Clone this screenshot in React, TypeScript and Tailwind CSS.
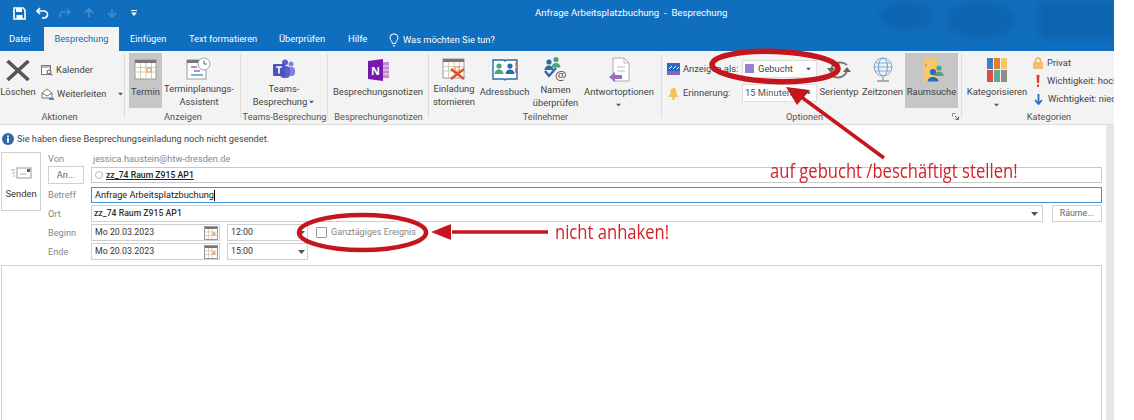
import React from "react";

const Caret = ({ className = "" }: { className?: string }) => (
  <svg width="7" height="4" viewBox="0 0 7 4" className={className}><path d="M0 0h7L3.500 4z" fill="#555" /></svg>
);

const Group = ({ w, label, labelCls = "", sep = true, children }: { w: string; label: string; labelCls?: string; sep?: boolean; children: React.ReactNode }) => (
  <div className={`${w} h-full flex flex-col shrink-0 relative`}>
    <div className="flex-1 flex min-h-0 pt-[2px]">{children}</div>
    <div className={`h-[17px] pt-[3px] text-center text-[9.2px] leading-[14px] text-[#555] whitespace-nowrap ${labelCls}`}>{label}</div>
    {sep && <div className="absolute right-0 top-[3px] bottom-[6px] w-px bg-[#dcdcdc]" />}
  </div>
);

const Big = ({ w, icon, lines, active, caret, inlineCaret }: { w: string; icon: React.ReactNode; lines: string[]; active?: boolean; caret?: boolean; inlineCaret?: boolean }) => (
  <div className={`${w} h-[55px] flex flex-col items-center shrink-0 ${active ? "bg-[#c6c6c6]" : ""}`}>
    <div className="h-[31px] flex items-center justify-center pt-[3px]">{icon}</div>
    <div className="text-[9.4px] leading-[13px] text-[#444] text-center whitespace-nowrap mt-[1px]">
      {lines.map((l, i) => (
        <div key={l} className="flex items-center justify-center">
          {l}
          {inlineCaret && i === lines.length - 1 && <Caret className="ml-[1px] scale-75" />}
        </div>
      ))}
      {caret && <div className="flex justify-center pt-[5px]"><Caret className="scale-75" /></div>}
    </div>
  </div>
);

const CalGrid = ({ x = 0 }: { x?: number }) => (
  <svg width="24" height="22" viewBox="0 0 24 22">
    <rect x="1" y="1" width="21" height="19" fill="#fff" stroke="#999" />
    <rect x="1" y="1" width="21" height="3" fill="#777" />
    <path d="M1 8.500h21M1 13h21M6.500 4v16M12 4v16M17.500 4v16" stroke="#d5c9b8" strokeWidth="1" />
    <rect x="13" y="9" width="4" height="4" fill="#fff" stroke="#e8914a" />
    {x ? <path d="M9 11l13 10M22 11L9 21" stroke="#d9542b" strokeWidth="2.400" /> : null}
  </svg>
);

const DateCal = () => (
  <svg width="14" height="14" viewBox="0 0 14 14" className="shrink-0">
    <rect x=".5" y=".5" width="13" height="13" fill="#fff" stroke="#999" />
    <rect x="1" y="1" width="12" height="2" fill="#777" />
    <path d="M1 6h12M1 9.500h12M4.500 3v10M8 3v10" stroke="#cfc5b5" strokeWidth=".8" />
    <rect x="8.500" y="6.500" width="3" height="3" fill="#f2a65a" />
  </svg>
);

const Person = ({ x, y, c, s = 1 }: { x: number; y: number; c: string; s?: number }) => (
  <g fill={c}>
    <circle cx={x} cy={y} r={2.6 * s} />
    <path d={`M${x - 4.500 * s} ${y + 8 * s}c0-6 ${9 * s}-6 ${9 * s} 0z`} />
  </g>
);

function Annotations() {
  const red = "#c5161d";
  return (
    <svg width="1134" height="420" viewBox="0 0 1134 420" className="absolute inset-0 pointer-events-none">
      <ellipse cx="775" cy="66.500" rx="63" ry="15" fill="none" stroke={red} strokeWidth="5.500" transform="rotate(2 775 66.500)" />
      <ellipse cx="362.500" cy="232.500" rx="63.500" ry="17.500" fill="none" stroke={red} strokeWidth="4.500" />
      <path d="M884 158L800 96" stroke={red} strokeWidth="3.500" />
      <path d="M786 87l24 3-13 15z" fill={red} />
      <path d="M548 232H452" stroke={red} strokeWidth="3.500" />
      <path d="M431 232l20-8v16z" fill={red} />
    </svg>
  );
}

export default function App() {
  return (
    <div className="relative w-[1134px] h-[420px] overflow-hidden bg-white font-['Roboto','Open_Sans',sans-serif]">
      <div className="w-[1114px] h-[420px] flex flex-col">
        {/* Title bar */}
        <div className="relative h-[51px] bg-[#106ebe] shrink-0 overflow-hidden">
          <svg width="240" height="44" viewBox="0 0 240 44" className="absolute right-0 top-0 blur-[3px]">
            <g fill="#0e65af">
              <ellipse cx="32" cy="16" rx="27" ry="13" />
              <ellipse cx="107" cy="20" rx="34" ry="18" />
              <rect x="165" y="-5" width="80" height="45" rx="8" />
            </g>
          </svg>
          <div className="relative h-[26px] flex items-center">
            <div className="pl-[13px] flex items-center gap-[10px]">
              <svg width="13" height="13" viewBox="0 0 13 13"><path d="M1 1h9l2 2v9H1z" fill="none" stroke="#fff" strokeWidth="1.600" /><rect x="3" y="1" width="6" height="4" fill="#fff" /><rect x="3.500" y="8" width="6" height="4" fill="#fff" /></svg>
              <svg width="13" height="12" viewBox="0 0 13 12"><path d="M4 1L1 4l3 3M1 4h7a3.500 3.500 0 0 1 0 7H6" fill="none" stroke="#fff" strokeWidth="1.700" /></svg>
              <svg width="12" height="10" viewBox="0 0 12 10" className="opacity-30"><path d="M8 1l3 3-3 3M11 4H5a3 3 0 0 0-3 5" fill="none" stroke="#bcd" strokeWidth="1.500" /></svg>
              <svg width="10" height="10" viewBox="0 0 10 10" className="opacity-30 ml-[3px]"><path d="M5 9V2M1 5l4-4 4 4" fill="none" stroke="#bcd" strokeWidth="1.800" /></svg>
              <svg width="10" height="10" viewBox="0 0 10 10" className="opacity-30 ml-[3px]"><path d="M5 1v7M1 5l4 4 4-4" fill="none" stroke="#bcd" strokeWidth="1.800" /></svg>
              <svg width="6" height="6" viewBox="0 0 6 6" className="ml-[4px]"><path d="M0 0h6v1H0zM0 2.500h6L3 6z" fill="#fff" /></svg>
            </div>
            <div className="absolute left-[535px] top-[5px] text-[9.6px] leading-[15px] text-white whitespace-nowrap">Anfrage Arbeitsplatzbuchung&nbsp; -&nbsp; Besprechung</div>
          </div>
          <div className="relative h-[25px] flex items-end text-[9.3px] leading-[14px] text-white whitespace-nowrap">
            <div className="w-[44px] pl-[9px] pb-[5px]">Datei</div>
            <div className="w-[75px] h-[24px] bg-[#f3f3f3] text-[#106ebe] text-center pt-[5px]">Besprechung</div>
            <div className="pl-[11px] pb-[5px] w-[70px]">Einfügen</div>
            <div className="pb-[5px] w-[90px]">Text formatieren</div>
            <div className="pb-[5px] w-[69px]">Überprüfen</div>
            <div className="pb-[5px] w-[40px]">Hilfe</div>
            <div className="pb-[4px] flex items-center gap-[4px] pl-[1px]">
              <svg width="10" height="14" viewBox="0 0 10 14"><path d="M3.500 10.500C3 8 1 7 1 4.800a4 4 0 0 1 8 0C9 7 7 8 6.500 10.500zM3.800 12.800h2.400" fill="none" stroke="#fff" strokeWidth="1" /></svg>
              <span>Was möchten Sie tun?</span>
            </div>
          </div>
        </div>

        {/* Ribbon */}
        <div className="h-[74px] shrink-0 bg-[#f3f3f3] border-b border-[#dedede] flex">
          <Group w="w-[125px]" label="Aktionen" labelCls="pr-[6px]">
            <div className="w-[36px] flex flex-col items-center">
              <div className="h-[31px] flex items-center pt-[3px]">
                <svg width="24" height="21" viewBox="0 0 24 21"><path d="M1.500 1l21 19M22.500 1L1.500 20" stroke="#555" strokeWidth="3.600" /></svg>
              </div>
              <div className="text-[9.4px] leading-[13px] text-[#444] mt-[1px]">Löschen</div>
            </div>
            <div className="flex flex-col text-[9.4px] leading-[14px] text-[#444] pl-[5px] pt-[10px] whitespace-nowrap">
              <div className="h-[24px] flex items-start gap-[3px]">
                <svg width="12" height="12" viewBox="0 0 12 12" className="mt-[1px]"><rect x=".5" y="1.500" width="9" height="9" fill="#fff" stroke="#777" /><path d="M.5 3h9" stroke="#777" /><circle cx="8" cy="8" r="2" fill="#fff" stroke="#555" /><path d="M9.500 9.500l2 2" stroke="#555" /></svg>
                <span>Kalender</span>
              </div>
              <div className="flex items-center gap-[3px]">
                <svg width="13" height="13" viewBox="0 0 13 13"><path d="M1 5l5-4 5 4v5H1z" fill="#fff" stroke="#777" /><path d="M1 5l5 3 5-3" fill="none" stroke="#777" /><path d="M8 11h5" stroke="#106ebe" strokeWidth="1.500" /></svg>
                <span>Weiterleiten</span>
                <Caret className="ml-[8px] scale-75" />
              </div>
            </div>
          </Group>
          <Group w="w-[116px]" label="Anzeigen">
            <div className="w-[4px]" />
            <Big w="w-[33px]" active icon={<CalGrid />} lines={["Termin"]} />
            <Big w="w-[74px]" icon={
              <svg width="26" height="24" viewBox="0 0 26 24"><rect x="1" y="3" width="19" height="19" fill="#fff" stroke="#999" /><rect x="1" y="3" width="19" height="3" fill="#777" /><path d="M5 10h6" stroke="#a24ca8" strokeWidth="1.300" /><path d="M8 14h6" stroke="#a24ca8" strokeWidth="1.300" /><path d="M5 18h12" stroke="#2b8bd6" strokeWidth="1.300" /><circle cx="18" cy="7" r="6" fill="#fff" stroke="#8aa5bd" /><path d="M18 3.500V7h3" fill="none" stroke="#666" /></svg>
            } lines={["Terminplanungs-", "Assistent"]} />
          </Group>
          <Group w="w-[87px]" label="Teams-Besprechung">
            <Big w="w-[86px]" inlineCaret icon={
              <svg width="24" height="20" viewBox="0 0 24 20"><circle cx="19" cy="5" r="2.500" fill="#7b83eb" /><circle cx="13" cy="3.500" r="3" fill="#5b5fc7" /><rect x="15" y="8" width="8" height="9" rx="3.500" fill="#7b83eb" /><rect x="8" y="7" width="10" height="12" rx="4" fill="#5b5fc7" /><rect x="1" y="5" width="12" height="12" rx="1" fill="#4b53bc" /><path d="M4 8h6M7 8v6.500" stroke="#fff" strokeWidth="1.600" /></svg>
            } lines={["Teams-", "Besprechung"]} />
          </Group>
          <Group w="w-[101px]" label="Besprechungsnotizen">
            <Big w="w-[100px]" icon={
              <svg width="24" height="24" viewBox="0 0 24 24"><rect x="15" y="4" width="8" height="16" fill="#c489d2" /><path d="M15 8h8M15 12h8M15 16h8" stroke="#fff" strokeWidth=".8" /><path d="M2 3l15-2v22L2 21z" fill="#7719aa" /><text x="5" y="16.500" fontSize="11" fontWeight="700" fill="#fff" fontFamily="Open Sans">N</text></svg>
            } lines={["Besprechungsnotizen"]} />
          </Group>
          <Group w="w-[233px]" label="Teilnehmer">
            <Big w="w-[50px]" icon={<CalGrid x={1} />} lines={["Einladung", "stornieren"]} />
            <Big w="w-[51px]" icon={
              <svg width="26" height="22" viewBox="0 0 26 22"><path d="M1 1h11l1 1 1-1h11v19H14l-1 1-1-1H1z" fill="#fff" stroke="#2b6ca8" strokeWidth="1.400" /><Person x={7} y={7} c="#4fa37a" /><Person x={18} y={7} c="#2b6ca8" /><path d="M24 3v5" stroke="#e0792b" strokeWidth="1.500" /><path d="M24 9v5" stroke="#8a5fb0" strokeWidth="1.500" /></svg>
            } lines={["Adressbuch"]} />
            <Big w="w-[51px]" icon={
              <svg width="26" height="26" viewBox="0 0 26 26"><Person x={6} y={6} c="#2b6ca8" /><Person x={13} y={3.500} c="#4fa37a" /><path d="M2 15l4 5 7-8" fill="none" stroke="#2b6ca8" strokeWidth="2.400" /><text x="12" y="24" fontSize="13" fill="#555" fontFamily="Open Sans">@</text></svg>
            } lines={["Namen", "überprüfen"]} />
            <Big w="w-[76px]" caret icon={
              <svg width="24" height="26" viewBox="0 0 24 26"><path d="M6 1h11l5 5v18H6z" fill="#fff" stroke="#aaa" /><path d="M17 1v5h5M10 10h8M10 14h8" fill="none" stroke="#bbb" /><path d="M2 20l6-5v3h7v4H8v3z" fill="#9b6fc4" /></svg>
            } lines={["Antwortoptionen"]} />
          </Group>
          <Group w="w-[300px]" label="Optionen" labelCls="pr-[15px]">
            <div className="w-[156px] pl-[5px] flex flex-col gap-[7px] pt-[7px] text-[9.4px] leading-[14px] text-[#444] whitespace-nowrap">
              <div className="h-[17px] flex items-center">
                <svg width="13" height="12" viewBox="0 0 13 12" className="shrink-0"><rect width="13" height="8" fill="#2b6cb8" /><rect y="8" width="13" height="4" fill="#8a62c4" /><path d="M2 6l3-3M6 6l3-3M10 6l2-2" stroke="#fff" /></svg>
                <span className="ml-[3px] w-[59px]">Anzeigen als:</span>
                <div className="w-[75px] h-[18px] bg-white border border-[#ddd] flex items-center pl-[2px] pr-[4px]">
                  <span className="w-[9px] h-[9px] bg-[#9b7fd4] shrink-0" />
                  <span className="ml-[4px] flex-1">Gebucht</span>
                  <Caret className="scale-75" />
                </div>
              </div>
              <div className="h-[18px] flex items-center">
                <svg width="13" height="13" viewBox="0 0 13 13" className="shrink-0"><path d="M6.500 1C4 1 3.500 3 3.500 5.500 3.500 8 1.500 9 1.500 10h10c0-1-2-2-2-4.500C9.500 3 9 1 6.500 1z" fill="#f3c15a" /><circle cx="6.500" cy="11.500" r="1.500" fill="#f3c15a" /></svg>
                <span className="ml-[3px] w-[59px]">Erinnerung:</span>
                <div className="w-[75px] h-[18px] bg-white border border-[#ddd] flex items-center pl-[2px] pr-[4px]">
                  <span className="flex-1 text-[#555]">15 Minuten</span>
                  <Caret className="scale-75" />
                </div>
              </div>
            </div>
            <Big w="w-[42px]" icon={
              <svg width="26" height="24" viewBox="0 0 26 24"><path d="M21 7a10 10 0 0 0-16 4M5 17a10 10 0 0 0 16-4" fill="none" stroke="#777" strokeWidth="2" /><path d="M1 10h8l-4 5zM25 14h-8l4-5z" fill="#666" /></svg>
            } lines={["Serientyp"]} />
            <Big w="w-[45px]" icon={
              <svg width="22" height="26" viewBox="0 0 22 26"><circle cx="11" cy="10" r="9" fill="#eaf2fa" stroke="#8aa5bd" /><ellipse cx="11" cy="10" rx="4.500" ry="9" fill="none" stroke="#7aa0c8" /><path d="M2 10h18M3.500 6h15M3.500 14h15" stroke="#7aa0c8" strokeWidth=".8" /><path d="M5 24h12M11 20v4" stroke="#999" strokeWidth="1.300" /></svg>
            } lines={["Zeitzonen"]} />
            <Big w="w-[53px]" active icon={
              <svg width="26" height="26" viewBox="0 0 26 26"><rect x="4" y="1" width="14" height="24" fill="#f2c76e" /><circle cx="7" cy="8" r="1" fill="#c99a3a" /><Person x={20} y={11} c="#5a9e82" /><Person x={14} y={15} c="#2b6cb8" s={1.200} /></svg>
            } lines={["Raumsuche"]} />
            <div className="absolute right-[3px] bottom-[4px]">
              <svg width="7" height="7" viewBox="0 0 7 7"><path d="M.5.500h3M.5.500v3" stroke="#888" /><path d="M3 3l3 3M6.500 3.500v3h-3" fill="none" stroke="#666" /></svg>
            </div>
          </Group>
          <Group w="w-[152px]" label="Kategorien" labelCls="pl-[22px]" sep={false}>
            <Big w="w-[70px]" caret icon={
              <svg width="20" height="24" viewBox="0 0 20 24"><rect x="0" y="0" width="6" height="11" fill="#3f7fc4" /><rect x="7" y="0" width="6" height="11" fill="#e87b2c" /><rect x="14" y="0" width="6" height="11" fill="#f2c76e" /><rect x="0" y="12" width="6" height="12" fill="#d8503c" /><rect x="7" y="12" width="6" height="12" fill="#5fa79a" /><rect x="14" y="12" width="6" height="12" fill="#8c8c8c" /></svg>
            } lines={["Kategorisieren"]} />
            <div className="w-[82px] flex flex-col text-[9.4px] leading-[18px] text-[#444] whitespace-nowrap pl-[1px] pt-[1px] overflow-hidden">
              <div className="flex items-center gap-[4px]">
                <svg width="10" height="12" viewBox="0 0 10 12" className="shrink-0"><path d="M2.500 5V3.500a2.500 2.500 0 0 1 5 0V5" fill="none" stroke="#e8b25a" strokeWidth="1.500" /><rect x="0" y="5" width="10" height="7" fill="#f2c06a" /></svg>
                <span>Privat</span>
              </div>
              <div className="flex items-center gap-[7px] pl-[3px]">
                <svg width="4" height="12" viewBox="0 0 4 12" className="shrink-0"><path d="M.5 0h3L3 8H1z" fill="#d8402c" /><rect x="1" y="9.500" width="2" height="2.500" fill="#d8402c" /></svg>
                <span>Wichtigkeit: hoch</span>
              </div>
              <div className="flex items-center gap-[5px] pl-[1px]">
                <svg width="9" height="11" viewBox="0 0 9 11" className="shrink-0"><path d="M4.500 0v9M1 6l3.500 4L8 6" fill="none" stroke="#2b6cb8" strokeWidth="1.800" /></svg>
                <span>Wichtigkeit: niedrig</span>
              </div>
            </div>
          </Group>
        </div>

        {/* Form */}
        <div className="flex-1 min-h-0 flex">
          <div className="w-[1106px] flex flex-col">
            <div className="h-[27px] flex items-center pl-[2px] gap-[3px] shrink-0 pt-[1px]">
              <svg width="12" height="12" viewBox="0 0 12 12"><circle cx="6" cy="6" r="6" fill="#2b6ca8" /><rect x="5" y="5" width="2" height="4.500" fill="#fff" /><rect x="5" y="2.500" width="2" height="1.600" fill="#fff" /></svg>
              <span className="text-[9.2px] leading-[12px] text-[#444]">Sie haben diese Besprechungseinladung noch nicht gesendet.</span>
            </div>
            <div className="flex shrink-0 text-[9.2px] text-[#333] whitespace-nowrap">
              <div className="ml-[1px] w-[40px] h-[59px] bg-white border border-[#d0d0d0] flex flex-col items-center pt-[14px]">
                <svg width="21" height="12" viewBox="0 0 21 12"><rect x="6" y="1" width="14" height="10" fill="#fff" stroke="#999" /><rect x="16" y="2" width="3" height="3" fill="#2b6ca8" /><path d="M9 7h6M0 3h4M1 6h3M2 9h2" stroke="#aaa" /></svg>
                <span className="mt-[8px] text-[9.4px] leading-[14px]">Senden</span>
              </div>
              <div className="ml-[7px] w-[1054px] flex flex-col">
                <div className="h-[13px] flex items-center text-[#888] mb-[1px]">
                  <span className="w-[45px]">Von</span>
                  <span>jessica.haustein@htw-dresden.de</span>
                </div>
                <div className="h-[18px] flex mb-[3px]">
                  <div className="w-[36px] h-[18px] border border-[#d0d0d0] bg-white flex items-center justify-center text-[#666]">An...</div>
                  <div className="ml-[7px] flex-1 mt-[1px] h-[16px] border border-[#c8c8c8] flex items-center pl-[3px] gap-[3px]">
                    <span className="w-[8px] h-[8px] rounded-full border border-[#bbb]" />
                    <span className="font-medium text-[#222] underline text-[8.7px] leading-[14px]">zz_74 Raum Z915 AP1</span>
                  </div>
                </div>
                <div className="h-[16px] flex items-center mb-[3px]">
                  <span className="w-[43px] text-[#888]">Betreff</span>
                  <div className="flex-1 h-[16px] border border-[#3f94d8] flex items-center pl-[3px] text-[#222]">
                    <span className="leading-[14px]">Anfrage Arbeitsplatzbuchung</span><span className="w-px h-[11px] bg-black" />
                  </div>
                </div>
              </div>
            </div>
            <div className="flex flex-col shrink-0 pl-[48px] text-[8.8px] text-[#333] whitespace-nowrap -mt-[6px]">
              <div className="h-[17px] flex items-center mb-[2px]">
                <span className="w-[43px] text-[9.2px] text-[#888]">Ort</span>
                <div className="w-[952px] h-[17px] border border-[#d0d0d0] flex items-center pl-[2px] pr-[4px] justify-between font-medium text-[8.7px]">
                  <span>zz_74 Raum Z915 AP1</span><Caret />
                </div>
                <div className="ml-[9px] w-[50px] h-[17px] border border-[#d0d0d0] flex items-center justify-center text-[#666]">Räume...</div>
              </div>
              <div className="h-[17px] flex items-center mb-[2px]">
                <span className="w-[43px] text-[9.2px] text-[#888]">Beginn</span>
                <div className="w-[129px] h-[17px] border border-[#d0d0d0] flex items-center pl-[3px] pr-[1px] justify-between"><span>Mo 20.03.2023</span><DateCal /></div>
                <div className="ml-[7px] w-[81px] h-[17px] border border-[#d0d0d0] flex items-center pl-[3px] pr-[2px] justify-between"><span>12:00</span><Caret /></div>
                <span className="ml-[8px] w-[11px] h-[11px] border border-[#999] bg-white rounded-[1px]" />
                <span className="ml-[4px] text-[9.1px] text-[#888]">Ganztägiges Ereignis</span>
              </div>
              <div className="h-[17px] flex items-center">
                <span className="w-[43px] text-[9.2px] text-[#888]">Ende</span>
                <div className="w-[129px] h-[17px] border border-[#d0d0d0] flex items-center pl-[3px] pr-[1px] justify-between"><span>Mo 20.03.2023</span><DateCal /></div>
                <div className="ml-[7px] w-[81px] h-[17px] border border-[#d0d0d0] flex items-center pl-[3px] pr-[2px] justify-between"><span>15:00</span><Caret /></div>
              </div>
            </div>
            <div className="ml-[1px] mt-[5px] w-[1101px] flex-1 border border-[#d0d0d0] border-b-0" />
          </div>
          <div className="w-[8px] bg-[#e6e6e6]" />
        </div>
      </div>
      <Annotations />
      <div className="absolute left-[770px] top-[157px] font-['Open_Sans',sans-serif] text-[20px] leading-[27px] font-medium text-[#d2232a] whitespace-nowrap origin-left scale-x-[0.83]">auf gebucht /beschäftigt stellen!</div>
      <div className="absolute left-[555px] top-[218px] font-['Open_Sans',sans-serif] text-[20px] leading-[27px] font-medium text-[#d2232a] whitespace-nowrap origin-left scale-x-[0.83]">nicht anhaken!</div>
    </div>
  );
}
